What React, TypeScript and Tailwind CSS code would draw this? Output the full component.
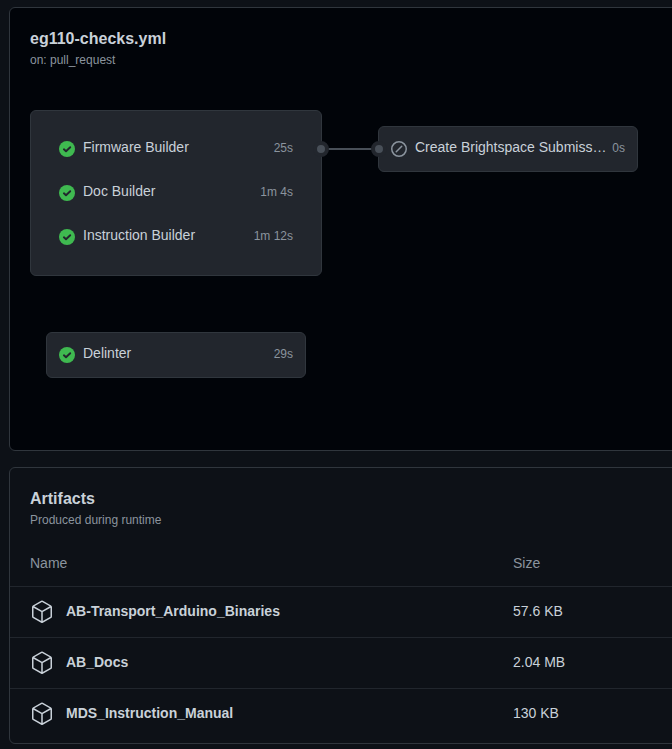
import React from "react";

const jobs = [
  { name: "Firmware Builder", time: "25s" },
  { name: "Doc Builder", time: "1m 4s" },
  { name: "Instruction Builder", time: "1m 12s" },
];

const artifacts = [
  { name: "AB-Transport_Arduino_Binaries", size: "57.6 KB" },
  { name: "AB_Docs", size: "2.04 MB" },
  { name: "MDS_Instruction_Manual", size: "130 KB" },
];

function CheckIcon() {
  return (
    <svg viewBox="0 0 16 16" className="mt-1 size-4 shrink-0">
      <circle cx="8" cy="8" r="8" fill="#3fb950" />
      <path d="M4.9 8.3 7 10.3l4.2-4.1" fill="none" stroke="#22262d" strokeWidth="1.9" strokeLinecap="round" strokeLinejoin="round" />
    </svg>
  );
}

function SkipIcon() {
  return (
    <svg viewBox="0 0 16 16" className="mt-1 size-4 shrink-0" fill="#8b949e">
      <path d="M8 0a8 8 0 1 1 0 16A8 8 0 0 1 8 0ZM1.5 8a6.5 6.5 0 1 0 13 0 6.5 6.5 0 0 0-13 0Zm9.78-2.22-5.5 5.5a.749.749 0 0 1-1.275-.326.749.749 0 0 1 .215-.734l5.5-5.5a.751.751 0 0 1 1.042.018.751.751 0 0 1 .018 1.042Z" />
    </svg>
  );
}

function PackageIcon() {
  return (
    <svg viewBox="0 0 24 24" className="mt-[2px] size-6 shrink-0" fill="#c9d1d9">
      <path d="M12.876.64V.639l8.25 4.763c.541.313.875.89.875 1.515v9.525a1.75 1.75 0 0 1-.875 1.516l-8.25 4.762a1.748 1.748 0 0 1-1.75 0l-8.25-4.763a1.75 1.75 0 0 1-.875-1.515V6.917c0-.625.334-1.202.875-1.515L11.126.64a1.748 1.748 0 0 1 1.75 0Zm-1 1.298L4.251 6.34l7.75 4.474 7.75-4.474-7.625-4.402a.248.248 0 0 0-.25 0Zm.875 19.123 7.625-4.402a.25.25 0 0 0 .125-.216V7.639l-7.75 4.474ZM3.501 7.64v8.803c0 .09.048.172.125.216l7.625 4.402v-8.947Z" />
    </svg>
  );
}

function Job({ name, time, skipped = false }: { name: string; time: string; skipped?: boolean }) {
  return (
    <div className="flex h-[44px] w-[258px] items-start px-3 pt-[10px]">
      {skipped ? <SkipIcon /> : <CheckIcon />}
      <span className="ml-2 min-w-0 flex-1 whitespace-nowrap text-[14px] leading-5">{name}</span>
      <span className="text-[12px] leading-[22px] text-[#8b949e]">{time}</span>
    </div>
  );
}

function Port() {
  return <span className="relative z-10 -mx-2 size-4 shrink-0 rounded-full border-4 border-[#22262d] bg-[#484f58]" />;
}

export default function App() {
  return (
    <main className="h-[749px] w-[672px] overflow-hidden bg-[#0d1117] pl-[9px] pt-[7px] font-['Liberation_Sans',Arial,sans-serif] text-[#c9d1d9]">
      <section className="h-[444px] w-[680px] rounded-md border border-[#30363d] bg-[#010409] px-5 pt-5">
        <h2 className="text-[16px] font-bold leading-[21px]">eg110-checks.yml</h2>
        <p className="mt-[2px] text-[12px] leading-[18px] text-[#8b949e]">on: pull_request</p>
        <div className="mt-[41px] flex items-start">
          <div className="h-[166px] w-[292px] rounded-md border border-[#30363d] bg-[#22262d] px-4 pt-4">
            {jobs.map((j) => <Job key={j.name} {...j} />)}
          </div>
          <div className="-mx-px mt-[31px] flex w-[58px] items-center">
            <Port />
            <span className="h-[2px] flex-1 bg-[#484f58]" />
            <Port />
          </div>
          <div className="mt-4 h-[46px] w-[260px] rounded-md border border-[#30363d] bg-[#22262d]">
            <Job name="Create Brightspace Submiss…" time="0s" skipped />
          </div>
        </div>
        <div className="ml-4 mt-14 h-[46px] w-[260px] rounded-md border border-[#30363d] bg-[#22262d]">
          <Job name="Delinter" time="29s" />
        </div>
      </section>
      <section className="mt-4 h-[277px] w-[680px] rounded-md border border-[#30363d]">
        <div className="px-5 pt-5">
          <h2 className="text-[16px] font-bold leading-[21px]">Artifacts</h2>
          <p className="mt-[2px] text-[12px] leading-[18px] text-[#8b949e]">Produced during runtime</p>
        </div>
        <div className="mt-6 flex h-[33px] px-5 text-[14px] leading-5 text-[#8b949e]">
          <span className="w-[483px]">Name</span><span>Size</span>
        </div>
        {artifacts.map((a) => (
          <div key={a.name} className="flex h-[51px] items-center border-t border-[#21262d] px-5 pb-[2px] text-[14px] leading-5">
            <PackageIcon />
            <span className="ml-3 w-[447px] font-bold">{a.name}</span>
            <span>{a.size}</span>
          </div>
        ))}
      </section>
    </main>
  );
}
